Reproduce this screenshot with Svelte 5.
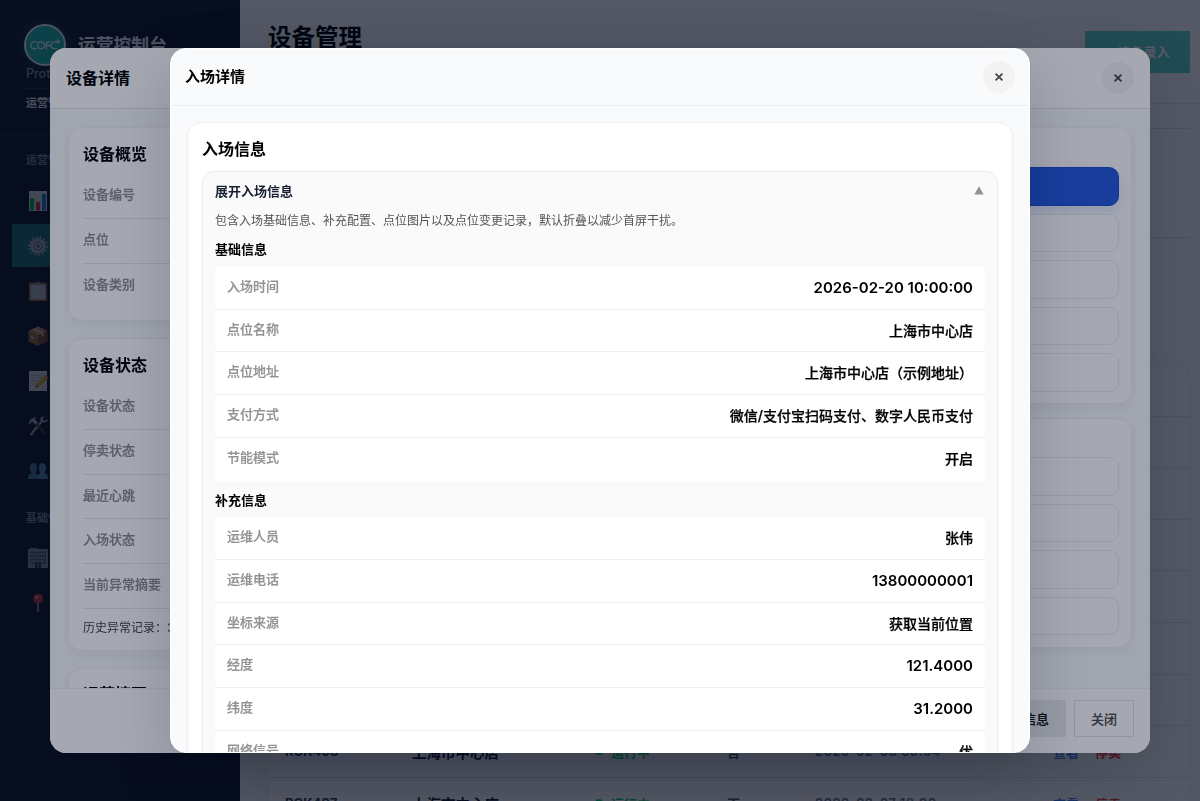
<script lang="ts">
	type Field = { label: string; value: string };

	let expanded = $state(true);
	let activeNav = $state('devices');

	const navMain = ['chart', 'devices', 'clipboard', 'box', 'memo', 'tools', 'people'];
	const navBase = ['building', 'pin'];

	const rows = [414, 413, 412, 411, 410, 409, 408, 407].map((n) => ({
		id: `RCK${n}`,
		site: '上海市中心店',
		status: '运行中',
		stopped: '否',
		time: n === 407 ? '2026-02-07 18:00' : '2026-02-08 09:54',
	}));

	const overview = ['设备编号', '点位', '设备类别'];
	const states = ['设备状态', '停卖状态', '最近心跳', '入场状态', '当前异常摘要'];

	const basicInfo: Field[] = [
		{ label: '入场时间', value: '2026-02-20 10:00:00' },
		{ label: '点位名称', value: '上海市中心店' },
		{ label: '点位地址', value: '上海市中心店（示例地址）' },
		{ label: '支付方式', value: '微信/支付宝扫码支付、数字人民币支付' },
		{ label: '节能模式', value: '开启' },
	];
	const extraInfo: Field[] = [
		{ label: '运维人员', value: '张伟' },
		{ label: '运维电话', value: '13800000001' },
		{ label: '坐标来源', value: '获取当前位置' },
		{ label: '经度', value: '121.4000' },
		{ label: '纬度', value: '31.2000' },
		{ label: '网络信号', value: '优' },
	];
</script>

{#snippet icon(name: string)}
	<svg class="icon" viewBox="0 0 20 20" width="20" height="20">
		{#if name === 'chart'}
			<rect x="1" y="0" width="18" height="20" fill="#e6eaee" />
			<path d="M1 5h18M1 10h18M1 15h18" stroke="#c2c9d0" stroke-width=".6" />
			<rect x="2" y="7" width="4" height="12.5" fill="#16b83a" />
			<rect x="8" y="11" width="4" height="8.5" fill="#d93636" />
			<rect x="14" y="3" width="4" height="16.5" fill="#2f7fe0" />
		{:else if name === 'devices'}
			<circle cx="10" cy="10" r="8.8" fill="none" stroke="#a8b0b8" stroke-width="2" stroke-dasharray="1.8 2.1" />
			<circle cx="10" cy="10" r="6.2" fill="#6b737c" stroke="#a9b0b8" stroke-width="3.2" />
			<circle cx="10" cy="10" r="2.4" fill="#3c4650" stroke="#c9cfd6" stroke-width="1.4" />
		{:else if name === 'clipboard'}
			<rect x="1" y="1.5" width="18" height="18.5" rx="1" fill="#9b6a3c" />
			<rect x="2.6" y="3.6" width="14.8" height="14.8" fill="#c4c9cf" />
			<path d="M5 4V2.4h3.2a1.8 1.8 0 0 1 3.6 0H15V4z" fill="#8b949e" />
			<path d="M5 8h10M5 11h10M5 14h10" stroke="#b0b6bd" stroke-width=".7" />
		{:else if name === 'box'}
			<path d="M.5 5 10 .3 19.5 5 10 9.5z" fill="#c69463" />
			<path d="M.5 5 10 9.5V20L.5 15.2z" fill="#a3703f" />
			<path d="M19.5 5 10 9.5V20l9.5-4.8z" fill="#865526" />
			<path d="M4.2 3.2 13.7 7.8v3l2-1V6.8L6.2 2.2z" fill="#e3c39c" />
			<path d="m3 10 3 1.4v2L3 12z" fill="#e5d9c8" />
		{:else if name === 'memo'}
			<rect x="1" y="0" width="18" height="20" fill="#dfe3e7" />
			<path d="M3 4h12M3 7h11M3 10h8M3 13h5" stroke="#aab3bb" stroke-width=".8" />
			<path d="m7 17 1.3-4.2L16.5 5l3 3-8.3 8z" fill="#eeb52c" />
			<path d="m16.5 5 1.2-1.2 3 3L19.5 8z" fill="#df6a6a" />
			<path d="m7 17 1.3-4.2 2.9 3.2z" fill="#b98a5c" />
		{:else if name === 'tools'}
			<path d="m4 17 10-12" stroke="#a9b1b9" stroke-width="2" />
			<path d="M19.4 3.2 16.5 5l-1.6-1.5L16 .5c-2.4-.2-4 1.4-3.7 3.8 1.2 2.3 5.3 2.8 6.8 1 .6-.7.6-1.4.3-2.1z" fill="#a9b1b9" />
			<path d="m7.5 6.5 10 12" stroke="#54392a" stroke-width="2.4" />
			<path d="M.4 7.2C2 2.8 5 .7 9 1.2L6.8 3l3.2 3.4-2.4 2.3-3.3-3-1.9 1.2.2 1.5z" fill="#a5adb6" />
			<path d="m4 17-1 2" stroke="#c7ccd2" stroke-width="2.4" />
		{:else if name === 'people'}
			<path d="M0 18c0-4 1.6-5 4-5.7C2.600 10.600 2 8.500 2 6.500 2 3.700 3.500 2 5.500 2S9 3.700 9 6.500c0 2-.6 4.100-1.600 5.800 2.100.7 3 1.700 3 5.700z" fill="#4e7fa6" />
			<path d="M9.600 18c0-4 1-5 3-5.700C11.500 10.600 11 8.500 11 6.500 11 3.700 12.500 2 14.500 2S18 3.700 18 6.500c0 2-.6 4.100-1.700 5.800C18.800 13 20 14 20 18z" fill="#5f91b8" />
		{:else if name === 'building'}
			<rect x="2" y="0" width="7" height="2" fill="#77818c" />
			<rect x="0" y="1" width="20" height="19" fill="#8e99a5" />
			<path d="M2 4.500h16M2 8h16M2 11.500h16M2 15h16" stroke="#3f5468" stroke-width="2" stroke-dasharray="1.600 .8" />
			<rect x="7" y="14" width="6" height="6" fill="#2b3641" />
			<path d="M10 14v6" stroke="#8e99a5" />
		{:else}
			<path d="M10 8v11" stroke="#a6adb5" stroke-width="1.600" />
			<circle cx="10" cy="5.500" r="5" fill="#d13b41" />
			<circle cx="8.800" cy="4.300" r="1.500" fill="#f09a9c" />
		{/if}
	</svg>
{/snippet}

{#snippet cross()}
	<svg viewBox="0 0 10 10" width="10" height="10"><path d="m1.600 1.600 6.800 6.800M8.400 1.600 1.600 8.400" stroke="currentColor" stroke-width="1.900" /></svg>
{/snippet}

{#snippet fieldList(items: Field[])}
	<div class="field-list">
		{#each items as f (f.label)}
			<div class="field">
				<span class="field-label">{f.label}</span>
				<strong class="field-value" class:numeric={/^[\d.:\- ]+$/.test(f.value)}>{f.value}</strong>
			</div>
		{/each}
	</div>
{/snippet}

<div class="console">
	<aside class="sidebar">
		<div class="brand">
			<div class="logo">
				<svg viewBox="0 0 32 14" width="32" height="14" fill="none" stroke="#e4f3f2" stroke-width="1.300">
					<path d="M8 3.800H5.200a3.400 3.400 0 0 0 0 6.800H8" />
					<circle cx="12" cy="7.200" r="3.400" />
					<path d="M17.300 11.500V6.500Q17.300 3.800 20 3.800h1.500M17.500 7.500H22" />
					<path d="M27 3.800h-1.500a3.400 3.400 0 0 0 0 6.800H28M26.500 3.500h4.500M28.800 1.300v4.400" />
				</svg>
			</div>
			<span class="brand-name">运营控制台</span>
		</div>
		<div class="proto">Prototype</div>
		<div class="role">运营管理员</div>
		<nav>
			<div class="nav-label">运营管理</div>
			{#each navMain as item (item)}
				<button class="nav-item" class:active={activeNav === item} onclick={() => (activeNav = item)} aria-label={item}>
					{@render icon(item)}
				</button>
			{/each}
			<div class="nav-label base">基础信息</div>
			{#each navBase as item (item)}
				<button class="nav-item" class:active={activeNav === item} onclick={() => (activeNav = item)} aria-label={item}>
					{@render icon(item)}
				</button>
			{/each}
		</nav>
	</aside>

	<main class="page">
		<header class="page-head">
			<h1>设备管理</h1>
			<button class="add">+ 设备录入</button>
		</header>
		<section class="filters"></section>
		<section class="table">
			<div class="tr th"></div>
			{#each rows as r (r.id)}
				<div class="tr">
					<span class="code">{r.id}</span>
					<span class="site">{r.site}</span>
					<span class="status"><i></i>{r.status}</span>
					<span class="stopped">{r.stopped}</span>
					<span class="time">{r.time}</span>
					<span class="view">查看</span>
					<span class="stop">停卖</span>
				</div>
			{/each}
		</section>
	</main>
</div>

<div class="overlay first">
	<div class="modal device">
		<header class="modal-head">
			<h2>设备详情</h2>
			<button class="close" aria-label="关闭">{@render cross()}</button>
		</header>
		<div class="device-body">
			<div class="col">
				<section class="card">
					<h3>设备概览</h3>
					{#each overview as label (label)}
						<div class="line">{label}</div>
					{/each}
				</section>
				<section class="card with-history">
					<h3>设备状态</h3>
					{#each states as label (label)}
						<div class="line">{label}</div>
					{/each}
					<p class="history">历史异常记录：3 条</p>
				</section>
				<section class="card">
					<h3>运营摘要</h3>
				</section>
			</div>
			<div class="col side">
				<section class="card actions">
					<button class="action primary" aria-label="action"></button>
					{#each Array(4) as _}
						<button class="action" aria-label="action"></button>
					{/each}
				</section>
				<section class="card actions">
					{#each Array(4) as _}
						<button class="action" aria-label="action"></button>
					{/each}
				</section>
			</div>
		</div>
		<footer class="modal-foot">
			<button class="btn filled">入场信息</button>
			<button class="btn">关闭</button>
		</footer>
	</div>
</div>

<div class="overlay second">
	<div class="modal entry">
		<header class="modal-head">
			<h2>入场详情</h2>
			<button class="close" aria-label="关闭">{@render cross()}</button>
		</header>
		<div class="entry-body">
			<section class="card">
				<h3>入场信息</h3>
				<div class="fold">
					<button class="fold-head" onclick={() => (expanded = !expanded)}>
						<span>展开入场信息</span>
						<svg class:flipped={!expanded} viewBox="0 0 10 9" width="10" height="9"><path d="M5 .3 9.700 8.600H.3z" fill="#929292" /></svg>
					</button>
					{#if expanded}
						<p class="hint">包含入场基础信息、补充配置、点位图片以及点位变更记录，默认折叠以减少首屏干扰。</p>
						<h4>基础信息</h4>
						{@render fieldList(basicInfo)}
						<h4>补充信息</h4>
						{@render fieldList(extraInfo)}
					{/if}
				</div>
			</section>
		</div>
	</div>
</div>

<style>
	:global(body) { overflow: hidden; font-family: Inter, 'Noto Sans CJK SC', sans-serif; color: #000; }
	:global(*) { box-sizing: border-box; }
	button { font: inherit; border: none; padding: 0; cursor: pointer; }
	h1, h2, h3, h4, p { margin: 0; }

	.console { display: flex; height: 100vh; overflow: hidden; }
	.sidebar { flex: none; width: 240px; background: #0f172a; color: #e2e8f0; }
	.brand { display: flex; align-items: center; gap: 12px; padding: 24px 24px 0; }
	.logo { width: 42px; height: 42px; border-radius: 50%; border: 2px solid #dce5ec; background: #20b5aa; display: grid; place-items: center; box-shadow: 0 0 14px rgba(32, 181, 170, 0.3); }
	.brand-name { padding-top: 1px; font-size: 17.800px; line-height: 26px; font-weight: 700; white-space: nowrap; }
	.proto { margin: 0 24px; padding: 0 2px; height: 23px; line-height: 15px; font-size: 12.500px; font-weight: 500; color: #8391a5; border-bottom: 1px solid #222d42; }
	.role { height: 46px; padding: 7px 26px; line-height: 15px; font-size: 11px; font-weight: 700; border-bottom: 1px solid #222d42; }
	nav { padding: 16px 12px; }
	.nav-label { height: 28px; padding: 0 14px; line-height: 18px; font-size: 11px; font-weight: 700; color: #74849b; }
	.nav-label.base { height: 27px; margin-top: 17px; }
	.nav-item { display: flex; align-items: center; width: 216px; height: 43px; margin-bottom: 2px; padding: 0 16px; background: none; }
	.nav-item.active { background: #1e6b75; }
	.icon { flex: none; overflow: visible; opacity: 0.9; }

	.page { flex: 1; display: flex; flex-direction: column; min-width: 0; background: #f8fafc; }
	.page-head { flex: none; display: flex; justify-content: space-between; align-items: center; height: 104px; padding: 0 10px 0 28px; border-bottom: 1px solid #dde2e8; }
	h1 { margin-top: -32px; font-size: 23.500px; font-weight: 700; }
	.add { width: 105px; height: 42px; background: #5cd2c7; color: #fff; font-size: 13px; font-weight: 700; }
	.filters { flex: none; height: 110px; margin: 24px 10px 0 28px; border-top: 1px solid #d5dae1; border-bottom: 1px solid #d5dae1; }
	.table { flex: none; margin: 126px 10px 0 28px; border: 1px solid #eef1f4; border-radius: 14px; background: #f8fafc; box-shadow: 0 8px 24px rgba(15, 23, 42, 0.06); }
	.tr { display: grid; grid-template-columns: 127px 183px 132px 88px 238px 42px 60px; align-items: center; height: 51.600px; padding: 0 0 0 16px; border-bottom: 1px solid #dde2e8; font-size: 13px; white-space: nowrap; }
	.code { font-weight: 700; color: #334155; }
	.site { font-size: 14.500px; font-weight: 700; color: #0f172a; }
	.status { display: flex; align-items: center; gap: 8px; font-weight: 700; color: #14c866; }
	.status i { width: 8px; height: 8px; border-radius: 50%; background: #12c76a; }
	.stopped { font-weight: 600; color: #475569; }
	.time { letter-spacing: 0.35px; font-weight: 600; color: #64748b; }
	.view { font-weight: 700; color: #3b82f6; }
	.stop { font-weight: 700; color: #ef3434; }

	.overlay { position: fixed; inset: 0; display: flex; align-items: center; justify-content: center; padding: 48px; }
	.overlay.first { background: rgba(6, 10, 18, 0.49); }
	.overlay.second { background: rgba(4, 12, 36, 0.355); }
	.modal { display: flex; flex-direction: column; height: 705px; overflow: hidden; border-radius: 16px; background: #f8fafc; box-shadow: 0 20px 60px rgba(2, 6, 16, 0.18); }
	.modal-head { flex: none; display: flex; align-items: center; justify-content: space-between; border-bottom: 1px solid #edeef0; }
	.close { display: grid; place-items: center; width: 32px; height: 32px; border-radius: 50%; background: #f3f3f4; color: #4b4b4b; }
	.close svg { display: block; }
	.card { border: 1px solid #eceef1; border-radius: 14px; background: #fff; box-shadow: 0 2px 8px rgba(15, 23, 42, 0.01); }
	h3 { font-size: 16px; line-height: 24px; font-weight: 700; }

	.device { width: 1100px; }
	.device .modal-head { height: 61px; padding: 0 16px; background: #fff; border-color: #dfe3e8; }
	.device h2 { padding-bottom: 2px; font-size: 16px; font-weight: 700; }
	.device .close { background: #f3f4f6; }
	.device-body { flex: 1; min-height: 0; overflow: hidden; display: flex; gap: 14px; padding: 18px; background: #f8fafc; }
	.device .card { flex: none; border-color: #f0f2f5; box-shadow: 0 4px 14px rgba(15, 23, 42, 0.06); }
	.col { flex: 1; display: flex; flex-direction: column; gap: 17px; }
	.col.side { flex: none; width: 400px; gap: 14px; }
	.col .card { padding: 14px; }
	.line { height: 44.800px; padding-top: 10px; line-height: 20px; font-size: 13px; font-weight: 500; color: #8a8d93; border-bottom: 1px solid #e6e8ec; -webkit-text-stroke: 0.2px; }
	.col h3 + .line { height: 53px; padding-top: 18px; }
	.line:last-child { height: 42px; border-bottom: none; }
	.history { padding-top: 10px; line-height: 18px; font-size: 12px; color: #444; }
	.with-history { height: 313px; }
	.col .card:last-child h3 { margin-top: -1px; }
	.side .actions { display: flex; flex-direction: column; gap: 8px; padding: 39px 12px 11.500px; }
	.action { flex: none; height: 38.500px; border: 1px solid #e8ebef; border-radius: 10px; background: #fff; }
	.side .actions + .actions { padding-top: 38px; }
	.action.primary { border-color: #1f4fcf; background: #2459e0; box-shadow: 0 6px 14px rgba(37, 99, 235, 0.15); }
	.modal-foot { flex: none; display: flex; justify-content: flex-end; align-items: flex-start; gap: 8px; height: 65px; padding: 11px 16px 0; border-top: 1px solid #f0f2f5; background: #fff; }
	.btn { height: 37px; padding: 0 16px; border: 1px solid #dfe3e8; background: #fff; font-size: 13px; font-weight: 500; color: #4b4b4b; -webkit-text-stroke: 0.15px; }
	.btn:last-child { width: 60px; }
	.btn.filled { border-color: #e9ebee; background: #e9ebee; color: #111; }

	.entry { width: 860px; border: 1px solid #fff; }
	.entry .modal-head { height: 57px; padding: 0 14px; }
	.entry h2 { padding-bottom: 3px; font-size: 15px; font-weight: 700; }
	.entry-body { flex: 1; min-height: 0; overflow: hidden; padding: 16px; }
	.entry-body .card { padding: 14px; }
	.fold { margin-top: 10px; padding: 0 12px 12px; border: 1px solid #ececed; border-radius: 12px; background: #fafafa; }
	.fold-head { display: flex; align-items: center; justify-content: space-between; width: 100%; height: 38px; padding-bottom: 1.500px; background: none; font-size: 13px; font-weight: 700; color: #172033; }
	.fold-head svg { margin-right: 1px; }
	.flipped { transform: rotate(180deg); }
	.hint { height: 30px; padding-top: 2px; line-height: 18px; font-size: 12px; color: #555; }
	h4 { height: 36.500px; line-height: 38px; margin: 0; font-size: 13px; font-weight: 700; }
	.hint + h4 { height: 26.800px; line-height: 18px; }
	.field-list { background: #fff; }
	.field { display: flex; justify-content: space-between; height: 42.750px; padding: 9px 12px 0; border-bottom: 1px solid #f0f0f0; }
	.field:last-child { border-bottom: none; }
	.field-label { line-height: 20px; font-size: 13px; font-weight: 500; color: #929292; -webkit-text-stroke: 0.2px; }
	.field-value { line-height: 23px; font-size: 14px; font-weight: 500; -webkit-text-stroke: 0.25px; }
	.numeric { font-size: 15px; font-weight: 600; -webkit-text-stroke: 0; }
</style>
